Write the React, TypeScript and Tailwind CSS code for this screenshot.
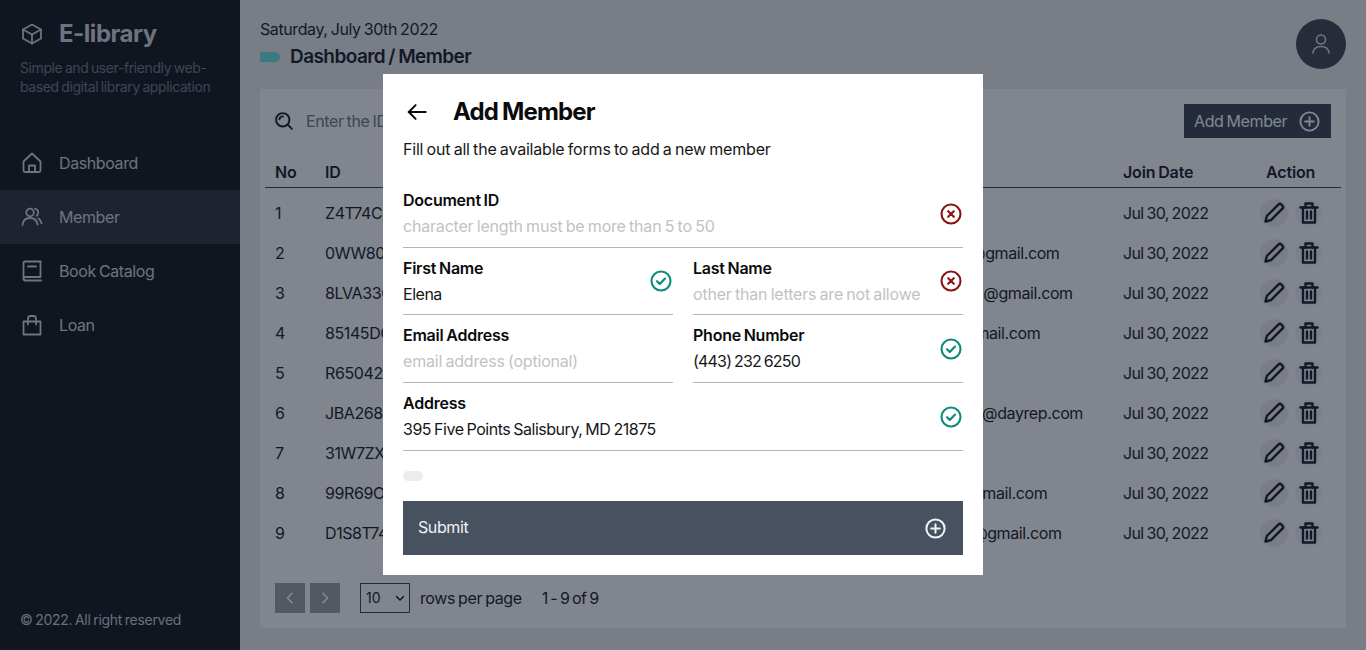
import React from "react";

const font = { fontFamily: "Inter, 'Liberation Sans', sans-serif" };

type IconProps = { className?: string; sw?: number };
const Svg = ({ className, sw = 1.8, children }: IconProps & { children: React.ReactNode }) => (
  <svg viewBox="0 0 24 24" fill="none" stroke="currentColor" strokeWidth={sw} strokeLinecap="round" strokeLinejoin="round" className={className}>
    {children}
  </svg>
);
const Cube = (p: IconProps) => (
  <Svg {...p}><path d="M12 2.5 21 7.500V16.500L12 21.500 3 16.500V7.500Z" /><path d="M3 7.500 12 12.500 21 7.500M12 12.500V21.500" /></Svg>
);
const Home = (p: IconProps) => (
  <Svg {...p}><path d="M3.500 10.500 12 2.500l8.500 8v9a1.500 1.500 0 0 1-1.500 1.500H5a1.500 1.500 0 0 1-1.500-1.500Z" /><path d="M9 21v-6.500h6V21" /></Svg>
);
const Users = (p: IconProps) => (
  <Svg {...p}><circle cx="10" cy="7.500" r="3.800" /><path d="M2.500 20c.4-4.500 3.500-7 7.500-7s6.800 2.300 7.600 6.500" /><path d="M15 3.600c2 .5 3.200 2.100 3.200 4 0 1.300-.6 2.500-1.600 3.200" /><path d="M18.500 13.500c1.600 1 2.600 2.700 3 4.800" /></Svg>
);
const Book = (p: IconProps) => (
  <Svg {...p}><path d="M20.500 2.500H5a1.500 1.500 0 0 0-1.500 1.500v15.500A2 2 0 0 0 5.500 21.500H21" /><path d="M20.500 2.500v15.500H5.500a2 2 0 0 0-2 1.500" /><path d="M8 7.500h8" /></Svg>
);
const Bag = (p: IconProps) => (
  <Svg {...p}><path d="M3.500 8.500h17v13h-17Z" /><path d="M8 11.500V5.500a2.500 2.500 0 0 1 2.500-2.500h3A2.500 2.500 0 0 1 16 5.500v6" /></Svg>
);
const Search = (p: IconProps) => (
  <Svg {...p}><circle cx="10.500" cy="10.500" r="8" /><path d="m16.500 16.500 5 5" /><path d="M6.500 10a4.200 4.200 0 0 1 4.200-3.500" /></Svg>
);
const Person = (p: IconProps) => (
  <Svg {...p}><circle cx="12" cy="7.500" r="4.500" /><path d="M4 21c.5-4.500 3.800-6.500 8-6.500s7.500 2 8 6.500" /></Svg>
);
const PlusCircle = (p: IconProps) => (
  <Svg {...p}><circle cx="12" cy="12" r="9.500" /><path d="M12 7.500v9M7.500 12h9" /></Svg>
);
const CheckC = (p: IconProps) => (
  <Svg {...p}><circle cx="12" cy="12" r="9.500" /><path d="m8 12.200 2.800 2.800L16 9.500" /></Svg>
);
const XC = (p: IconProps) => (
  <Svg {...p}><circle cx="12" cy="12" r="9.500" /><path d="m9.200 9.200 5.600 5.600M14.800 9.200l-5.600 5.600" /></Svg>
);
const Pencil = (p: IconProps) => (
  <Svg {...p}><path d="M3.500 20.500 4.800 15 16.300 3.600a2.200 2.200 0 0 1 3.100 0l1 1a2.200 2.200 0 0 1 0 3.100L9 19.200Z" /></Svg>
);
const Trash = (p: IconProps) => (
  <Svg {...p}><path d="M3.500 6.500h17" /><path d="M8.500 6.500V2.500h7v4" /><path d="M6 6.500v15h12v-15" /><path d="M10 10.500v7M14 10.500v7" /></Svg>
);
const Arrow = (p: IconProps) => (
  <Svg {...p}><path d="M21.500 12H3" /><path d="M10.500 4.500 3 12l7.500 7.500" /></Svg>
);

const rows = [
  ["1", "Z4T74C0K2LQ", ""],
  ["2", "0WW80P3HS1A", "mirandafreymorgani@gmail.com"],
  ["3", "8LVA33CJH7E", "clarencemillerjones88@gmail.com"],
  ["4", "85145DCW3TR", "jimesrobertson55@gmail.com"],
  ["5", "R65042HRN9X", ""],
  ["6", "JBA2680PQ1Z", "kathleenbrooksmoore@dayrep.com"],
  ["7", "31W7ZXKU4MN", ""],
  ["8", "99R69OVB5ED", "michaelstonehill77@gmail.com"],
  ["9", "D1S8T74YF2G", "charlottewellsmiller9@gmail.com"],
];

const nav = [
  { label: "Dashboard", Icon: Home },
  { label: "Member", Icon: Users, active: true },
  { label: "Book Catalog", Icon: Book },
  { label: "Loan", Icon: Bag },
];

function Field({ label, value, placeholder, status, className = "", valueClass = "tracking-[-0.03em]" }: { label: string; value?: string; placeholder?: string; status?: "ok" | "err"; className?: string; valueClass?: string }) {
  return (
    <div className={`flex items-center border-b border-[#b4b4b4] ${className}`}>
      <div className="min-w-0 flex-1 self-start pr-[18px] pt-2">
        <div className="text-base font-semibold leading-6 tracking-[-0.015em] text-[#0b0b0b]">{label}</div>
        <div className={`mt-[2px] overflow-hidden whitespace-nowrap text-base leading-6 ${value ? `text-[#171717] ${valueClass}` : "tracking-[-0.012em] text-[#c2c2c2]"}`}>{value || placeholder}</div>
      </div>
      {status === "ok" && <CheckC className="h-6 w-6 shrink-0 text-[#0d8a7e]" sw={2.1} />}
      {status === "err" && <XC className="h-6 w-6 shrink-0 text-[#8b1414]" sw={2.1} />}
    </div>
  );
}

export default function App() {
  return (
    <div style={font} className="relative flex h-[650px] w-[1366px] overflow-hidden bg-[#e1e2e2] text-base tracking-[-0.025em] text-[#111827] [word-spacing:-1px]">
      <aside className="flex w-[240px] shrink-0 flex-col bg-[#0f1419] text-[#c9ced6]">
        <div className="px-5 pt-[18px]">
          <div className="flex items-center gap-[15px]">
            <Cube className="h-6 w-6" />
            <span className="text-2xl font-bold leading-8 tracking-[-0.02em]">E-library</span>
          </div>
          <p className="mt-[8px] text-sm leading-[19px] text-[#6b7280]">Simple and user-friendly web-based digital library application</p>
        </div>
        <nav className="mt-[40px] flex flex-col">
          {nav.map(({ label, Icon, active }) => (
            <div key={label} className={`flex h-[54px] items-center gap-[15px] px-5 ${active ? "bg-[#2a2e3b]" : ""}`}>
              <Icon className="h-6 w-6" />
              <span className="text-base">{label}</span>
            </div>
          ))}
        </nav>
        <div className="mt-auto px-5 pb-[20px] text-sm leading-5 tracking-[-0.02em] text-[#c0c4cb]">© 2022. All right reserved</div>
      </aside>

      <main className="flex min-w-0 flex-1 flex-col px-5">
        <header className="flex h-[89px] shrink-0 items-start justify-between pt-[17px]">
          <div>
            <div className="text-base leading-6">Saturday, July 30th 2022</div>
            <div className="mt-[2px] flex items-center gap-[10px] leading-7">
              <span className="h-[10px] w-5 rounded-l-sm rounded-r-full bg-[#67dadc]" />
              <span className="text-[19px] font-semibold tracking-[-0.03em]">Dashboard / Member</span>
            </div>
          </div>
          <div className="mt-[2px] flex h-[50px] w-[50px] items-center justify-center rounded-full bg-[#3a404d] text-[#d5d8dd]">
            <Person className="h-6 w-6" sw={1.5} />
          </div>
        </header>

        <section className="flex h-[539px] flex-col bg-[#f1f2f2] px-[5px] pt-[15px]">
          <div className="flex h-[34px] items-center justify-between pl-[9px] pr-[10px]">
            <div className="flex items-center gap-[12px]">
              <Search className="h-5 w-5" sw={2.3} />
              <span className="text-[#6b7280]">Enter the ID, name, or email</span>
            </div>
            <div className="flex h-[34px] w-[147px] items-center justify-between bg-[#364050] px-[10px] text-[#f3f4f6]">
              <span>Add Member</span>
              <PlusCircle className="h-[23px] w-[23px]" sw={2} />
            </div>
          </div>

          <div className="mt-[19px] flex h-[31px] items-center border-b border-[#374151] pl-[10px] font-semibold tracking-[-0.01em]">
            <span className="w-[50px]">No</span>
            <span className="w-[798px]">ID</span>
            <span className="w-[143px]">Join Date</span>
            <span>Action</span>
          </div>
          <div className="mt-[5px] flex flex-col">
            {rows.map(([no, id, email]) => (
              <div key={no} className="flex h-10 items-center pl-[10px]">
                <span className="w-[50px]">{no}</span>
                <span className="w-[450px] whitespace-nowrap">{id}</span>
                <span className="w-[348px] whitespace-nowrap pl-[50px]">{email}</span>
                <span className="w-[137px] whitespace-nowrap tracking-[-0.04em]">Jul 30, 2022</span>
                <span className="flex items-center gap-[7px]">
                  <span className="flex h-[28px] w-[28px] items-center justify-center rounded-full bg-[#e2e3e3]"><Pencil className="h-6 w-6" sw={2.4} /></span>
                  <span className="flex h-[28px] w-[28px] items-center justify-center rounded-full bg-[#e9eaea]"><Trash className="h-6 w-6" sw={2.4} /></span>
                </span>
              </div>
            ))}
          </div>
          <div className="mt-[30px] flex h-[30px] items-center pl-[10px]">
            <span className="flex h-[30px] w-[30px] items-center justify-center bg-[#96999f] text-[#f3f4f6]"><svg viewBox="0 0 24 24" className="h-4 w-4" fill="none" stroke="currentColor" strokeWidth="2.500" strokeLinecap="round" strokeLinejoin="round"><path d="m15 5-7 7 7 7" /></svg></span>
            <span className="ml-[5px] flex h-[30px] w-[30px] items-center justify-center bg-[#96999f] text-[#f3f4f6]"><svg viewBox="0 0 24 24" className="h-4 w-4" fill="none" stroke="currentColor" strokeWidth="2.500" strokeLinecap="round" strokeLinejoin="round"><path d="m9 5 7 7-7 7" /></svg></span>
            <span className="ml-5 flex h-[30px] w-[50px] items-center justify-between border border-[#374151] pl-[5px] pr-[3px] text-sm tracking-normal">
              10
              <svg viewBox="0 0 24 24" className="h-3 w-3" fill="none" stroke="currentColor" strokeWidth="3" strokeLinecap="round" strokeLinejoin="round"><path d="m5 9 7 7 7-7" /></svg>
            </span>
            <span className="ml-[10px]">rows per page</span>
            <span className="ml-5 tracking-[-0.04em]">1 - 9 of 9</span>
          </div>
        </section>
      </main>

      <div className="absolute inset-0 flex items-center justify-center bg-[#111827]/50 pb-px">
        <div className="flex h-[501px] w-[600px] flex-col bg-white px-5 pt-[22px]">
          <div className="flex h-8 items-center gap-[25px] pl-[3px]">
            <Arrow className="h-[22px] w-[22px] text-[#0b0b0b]" sw={2.2} />
            <h2 className="text-2xl font-bold leading-8 tracking-[-0.035em] text-[#0b0b0b]">Add Member</h2>
          </div>
          <p className="mt-[9px] leading-6 tracking-[-0.012em] text-[#171717]">Fill out all the available forms to add a new member</p>
          <Field label="Document ID" placeholder="character length must be more than 5 to 50" status="err" className="mt-[19px] h-[68px]" />
          <div className="grid grid-cols-2 gap-x-5">
            <Field label="First Name" value="Elena" status="ok" className="h-[67px]" />
            <Field label="Last Name" placeholder="other than letters are not allowed" status="err" className="h-[67px]" />
            <Field label="Email Address" placeholder="email address (optional)" className="h-[68px]" />
            <Field label="Phone Number" value="(443) 232 6250" valueClass="tracking-[-0.05em]" status="ok" className="h-[68px]" />
          </div>
          <Field label="Address" value="395 Five Points Salisbury, MD 21875" status="ok" className="h-[68px]" />
          <div className="mt-[20px] h-[10px] w-5 rounded-full bg-[#ececec]" />
          <div className="mt-[20px] flex h-[54px] items-center justify-between bg-[#475160] pl-[15px] pr-[16px] text-[#f1f2f4]">
            <span className="-mt-[2px]">Submit</span>
            <PlusCircle className="h-[23px] w-[23px]" sw={2.1} />
          </div>
        </div>
      </div>
    </div>
  );
}
